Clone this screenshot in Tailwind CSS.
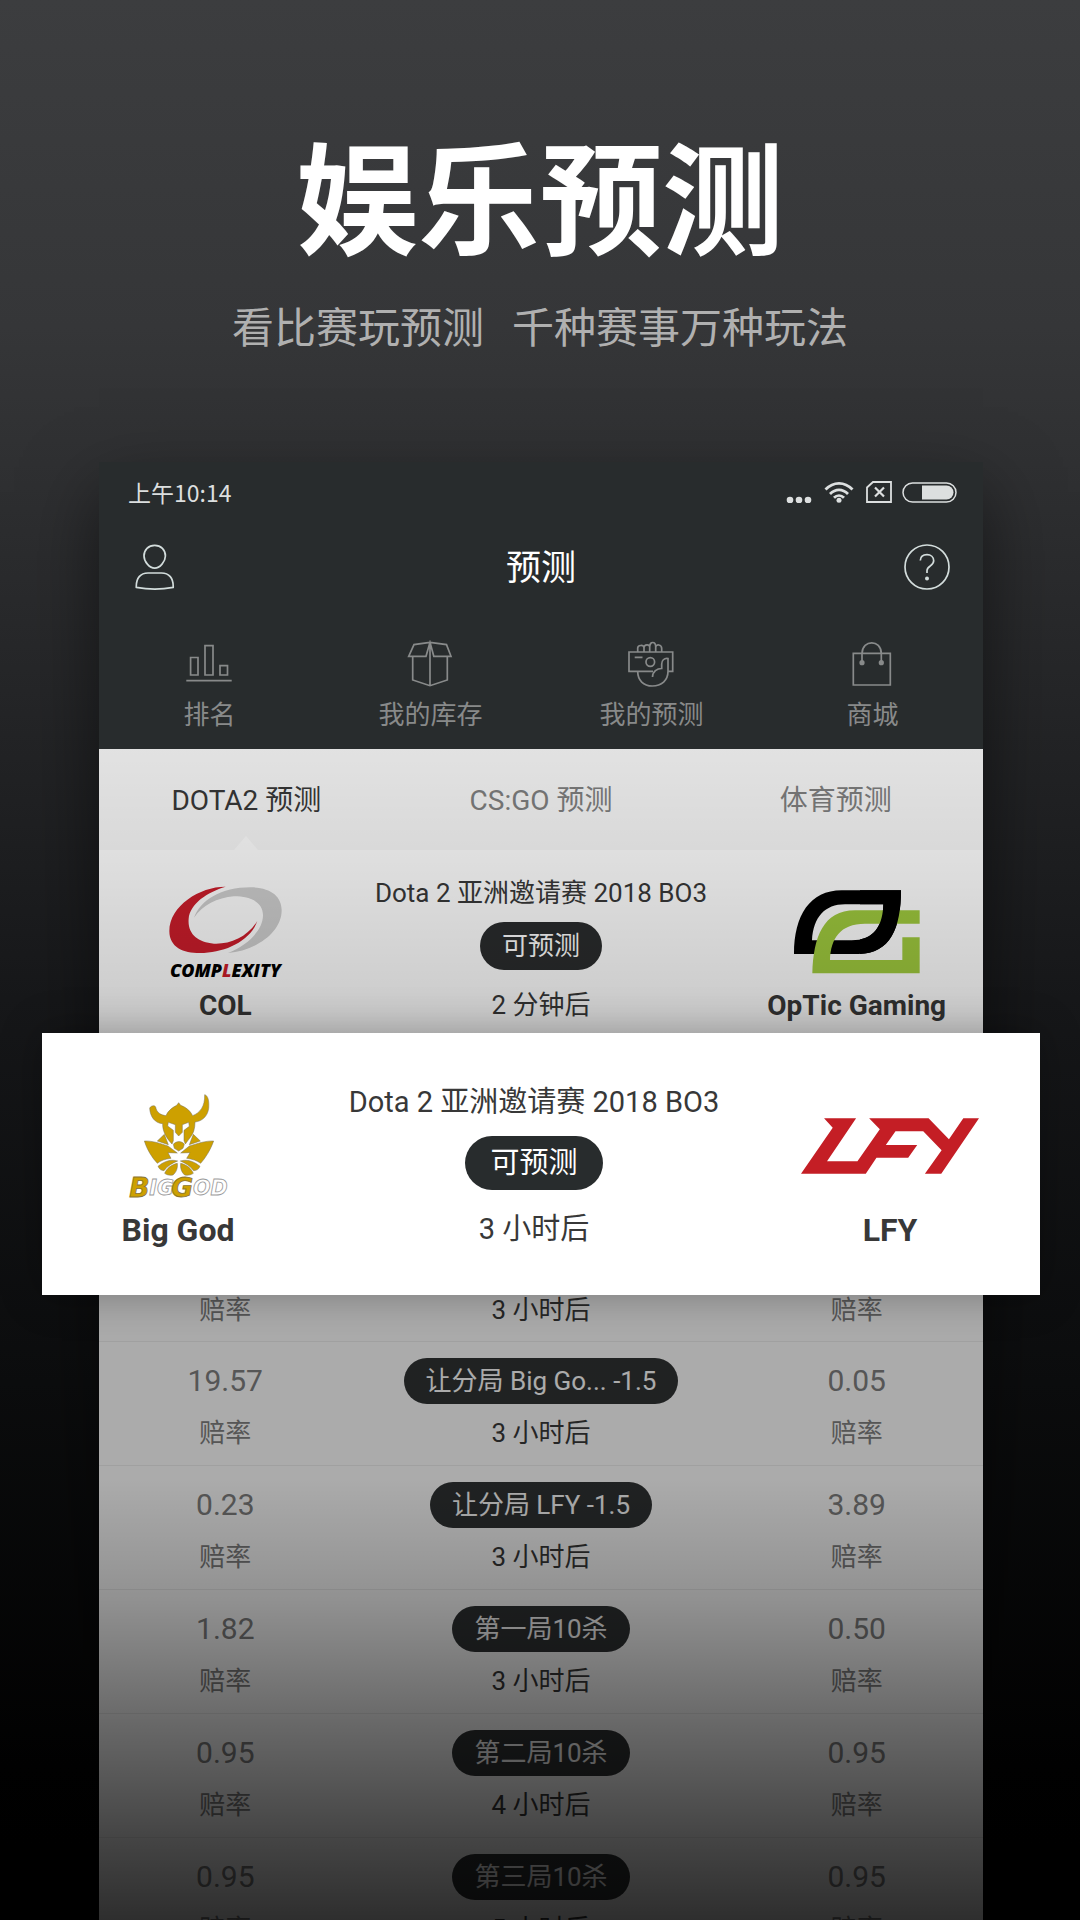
<!DOCTYPE html>
<html lang="zh-CN">
<head>
    <meta charset="UTF-8">
    <meta name="viewport" content="width=device-width, initial-scale=1.0">
    <title>娱乐预测</title>
    <script src="https://cdn.jsdelivr.net/npm/@tailwindcss/browser@4"></script>
</head>
<body class="bg-black font-[Roboto,'Noto_Sans_CJK_SC',sans-serif]">
<main class="h-screen overflow-hidden bg-[linear-gradient(to_bottom,#3c3d3f_0%,#353638_17%,#252628_36%,#17181a_52%,#0c0d0e_72%,#020202_92%,#000_100%)]">

    <!-- Headline -->
    <div class="pt-[134px] text-center">
        <h1 class="text-[122px] leading-[140px] font-bold text-white">娱乐预测</h1>
        <p class="mt-[30px] text-[42px] leading-[50px] text-[#b0b0b0] flex justify-center gap-7">
            <span>看比赛玩预测</span>
            <span>千种赛事万种玩法</span>
        </p>
    </div>

    <!-- Phone -->
    <div class="mt-[108px] ml-[99px] mr-[97px] shadow-[0_30px_70px_0_rgb(0_0_0/0.5)]">

        <header class="bg-[#282c2d]">
            <!-- Status bar -->
            <div class="flex h-[60px] items-center justify-between pl-[29px] pr-[26px] text-[#dcdfdf]">
                <span class="font-['Noto_Sans_CJK_SC',sans-serif] text-[23px]">上午10:14</span>
                <div class="flex items-center">
                    <svg class="mr-3" width="26" height="22" viewBox="0 0 26 22" fill="currentColor">
                        <circle cx="4" cy="19" r="3.3"/><circle cx="13" cy="19" r="3.3"/><circle cx="22" cy="19" r="3.3"/>
                    </svg>
                    <svg class="mr-3" width="30" height="22" viewBox="0 0 30 22" fill="none" stroke="currentColor" stroke-width="2.8">
                        <path d="M1.5 8.5C9.500 0.200 20.500 0.200 28.500 8.500M6 13C11.500 7.500 18.500 7.500 24 13M10 16.800C13 13.800 17 13.800 20 16.800"/>
                        <circle cx="15" cy="19.300" r="2.500" fill="currentColor" stroke="none"/>
                    </svg>
                    <svg class="mr-2.5" width="26" height="22" viewBox="0 0 26 22" fill="none" stroke="currentColor" stroke-width="1.8">
                        <path d="M7 1H25V21H1V6.500Z"/>
                        <path d="M9 6.500L18 15.500M18 6.500L9 15.500" stroke-width="2.200"/>
                    </svg>
                    <svg width="55" height="21" viewBox="0 0 55 21">
                        <rect x="1" y="1" width="53" height="19" rx="9.500" fill="none" stroke="currentColor" stroke-width="1.500"/>
                        <path d="M20 3.500H44.500a7 7 0 0 1 0 14H20Z" fill="currentColor"/>
                    </svg>
                </div>
            </div>

            <!-- Title bar -->
            <div class="flex h-[90px] items-center justify-between px-8">
                <button type="button" aria-label="我的">
                    <svg width="48" height="48" viewBox="0 0 48 48" fill="none" stroke="#d3dddc" stroke-width="1.700">
                        <path d="M23.700 2.400C30 2.400 34.400 7 34.400 13C34.400 18.500 29 25.200 23.700 25.200C18.400 25.200 13 18.500 13 13C13 7 17.400 2.400 23.700 2.400Z"/>
                        <path d="M5.300 44.300C5 35 9.500 30 17 30H30.500C38 30 42.500 35 42.200 44.300Q24 47.800 5.300 44.300Z"/>
                    </svg>
                </button>
                <h2 class="pt-1 text-[35px] text-white">预测</h2>
                <button type="button" aria-label="帮助">
                    <svg width="48" height="48" viewBox="0 0 48 48" fill="none" stroke="#d3dddc" stroke-width="1.700">
                        <circle cx="24" cy="24" r="22"/>
                        <path d="M17.300 17.500C17.500 13.800 20.200 11.700 24 11.700C27.800 11.700 30.700 14.200 30.700 17.800C30.700 23.300 24 22.500 24 27.500V30"/>
                        <circle cx="24" cy="35.500" r="2" fill="#d3dddc" stroke="none"/>
                    </svg>
                </button>
            </div>

            <!-- Shortcuts -->
            <nav class="grid grid-cols-4 pt-7 pb-[19px] text-[26px] leading-[30px] text-[#888a8a]">
                <a href="#rank" class="flex flex-col items-center gap-3">
                    <svg width="48" height="48" viewBox="1 0 48 48" fill="none" stroke="currentColor" stroke-width="1.700">
                        <path d="M1.300 40.700H46.700M5.600 17.500H13V35H5.600ZM20 5.600H28V35H20ZM35 25.700H42.500V35H35Z"/>
                    </svg>
                    排名
                </a>
                <a href="#stock" class="flex flex-col items-center gap-3">
                    <svg width="48" height="48" viewBox="1 0 48 48" fill="none" stroke="currentColor" stroke-width="1.700">
                        <path d="M24 2.300L8 4.600L2.700 16.300H20L24 2.300L27.800 16.300H45L40.500 4.600ZM6.700 16.300V40L24 45.700L41.300 40V16.300M24 3V45.700"/>
                    </svg>
                    我的库存
                </a>
                <a href="#bets" class="flex flex-col items-center gap-3">
                    <svg width="48" height="48" viewBox="1 0 48 48" fill="none" stroke="currentColor" stroke-width="1.700">
                        <path d="M41 31.300H45.700V12H2V31.300H26M7.700 17.300H15.500"/>
                        <circle cx="23.300" cy="22" r="4.300"/>
                        <path d="M10.700 12V8C10.700 5 16.500 4.500 17 7.500V12M17 7.500C17.300 4 22.500 4 22.700 7V12M22.700 7C22.700 1 28.700 1 28.700 7V12M28.700 7.500C29 3.500 34.700 4.500 34.700 8.500V12"/>
                        <path d="M10.700 31.300C10.700 40.500 16.500 46 25.300 46C34.500 46 41 40.500 41 31.300V18.500C37 18 34.700 20.500 34.700 24V28.500C30 28.500 25.700 31.500 25.500 37"/>
                    </svg>
                    我的预测
                </a>
                <a href="#shop" class="flex flex-col items-center gap-3">
                    <svg width="48" height="48" viewBox="1 0 48 48" fill="none" stroke="currentColor" stroke-width="1.700">
                        <path d="M5.300 13.300H42.300V45H5.300ZM14 22.500V13.500C14.500 -0.800 33 -0.800 33.300 13.500V22.500"/>
                        <circle cx="14" cy="22.700" r="2.600" fill="currentColor" stroke="none"/><circle cx="33.300" cy="22.700" r="2.600" fill="currentColor" stroke="none"/>
                    </svg>
                    商城
                </a>
            </nav>
        </header>

        <div class="relative bg-white text-[#383838]">
            <!-- Tabs -->
            <div class="grid h-[101px] grid-cols-3 bg-[#f8f8f8] text-[28px]" role="tablist">
                <button type="button" role="tab" aria-selected="true" class="relative pt-0.5">
                    DOTA2 预测
                    <svg class="absolute bottom-0 left-1/2 -translate-x-1/2" width="24" height="14" viewBox="0 0 24 14"><path d="M0 14L12 0L24 14Z" fill="#fff"/></svg>
                </button>
                <button type="button" role="tab" aria-selected="false" class="pt-0.5 text-[#808080]">CS:GO 预测</button>
                <button type="button" role="tab" aria-selected="false" class="pt-0.5 text-[#808080]">体育预测</button>
            </div>

            <!-- Match -->
            <section class="grid grid-cols-[2fr_3fr_2fr] pt-[25px] pb-[9px] text-center text-[26px] leading-9">
                <div>
                    <div class="flex h-[113px] items-center justify-center">
                        <svg class="overflow-visible" width="115" height="94" viewBox="232 434 345 282">
                            <path fill="#cc1d2b" d="M405 439C330 438 236 495 236 572C236 625 285 641 340 638C410 634 480 600 500 542C470 590 420 612 370 610C320 606 290 580 294 535C298 490 350 455 405 439Z"/>
                            <path fill="#cfcfcf" d="M310 532C330 480 390 441 480 441C540 441 573 468 573 510C573 580 490 632 412 638C470 615 517 570 517 525C517 485 480 468 430 468C380 472 335 495 310 532Z"/>
                            <text x="404" y="711" text-anchor="middle" font-family="'Open Sans'" font-size="54" font-weight="800" font-style="italic">COMP<tspan fill="#cc1d2b">L</tspan>EXITY</text>
                        </svg>
                    </div>
                    <p class="text-[28px] font-bold">COL</p>
                </div>
                <div class="flex flex-col items-center">
                    <h3>Dota 2 亚洲邀请赛 2018 BO3</h3>
                    <button type="button" class="mt-[11px] h-12 w-[122px] rounded-full bg-[#2a2c2d] text-white">可预测</button>
                    <p class="mt-[17px]">2 分钟后</p>
                </div>
                <div>
                    <div class="flex h-[113px] items-center justify-center">
                        <svg width="126" height="84" viewBox="762 450 378 250">
                            <clipPath id="leaf"><path d="M960 440H1150V650H960Z"/></clipPath>
                            <path id="ring" fill="#000" fill-rule="evenodd" d="M762 641C762 525 810 450 905 450H1083C1083 565 1050 641 955 641ZM816 600H935C1000 600 1028 560 1030 492H915C855 492 820 530 816 600Z"/>
                            <path fill="#a0cb3e" d="M817 699C820 590 850 510 945 510H1139V550H975C900 550 872 595 870 659H1087V591H1139V699Z"/>
                            <use href="#ring" clip-path="url(#leaf)"/>
                        </svg>
                    </div>
                    <p class="text-[28px] font-bold">OpTic Gaming</p>
                </div>
            </section>

            <!-- Highlighted match -->
            <section class="relative z-10 -mx-[57px] grid grid-cols-[272px_1fr_272px] bg-white pt-[49px] pr-[14px] pb-[45px] text-center text-[29px] leading-10 shadow-[0_0_40px_rgb(0_0_0/0.3)]">
                <div>
                    <div class="flex h-32 items-center justify-center">
                        <svg class="overflow-visible" width="99" height="104" viewBox="295 194 297 312">
                            <g fill="#cda000" stroke="#77725f" stroke-width="1.500">
                                <path d="M357 236C362 228 372 227 375 233C378 250 390 257 406 259C412 243 428 233 438 228L444 220L450 228C466 234 478 243 486 259C508 250 523 232 522 196C532 198 536 215 534 237C531 262 513 276 493 278C493 298 488 314 479 324L464 344L460 334V303L476 291L474 279L455 286V309L444 320L434 309V286L413 279L411 290L428 303V334L424 344C407 326 395 305 396 283C373 282 358 262 357 236Z"/>
                                <path d="M428 345C436 334 454 334 461 345L457 357L444 365L431 357Z"/>
                                <path d="M401 315L380 335L413 346ZM488 315L509 335L476 346Z"/>
                                <path d="M341 335C365 334 388 342 412 350L440 371L412 370L421 387C403 389 390 394 380 402C364 385 349 361 341 335Z"/>
                                <path d="M549 335C525 334 502 342 476 350L450 371L478 370L468 387C485 389 499 394 510 402C525 385 540 361 549 335Z"/>
                                <path d="M382 411C403 393 424 390 441 395C426 401 411 409 400 424C392 424 386 420 382 411ZM508 411C487 393 466 390 449 395C463 401 478 409 489 424C498 424 504 420 508 411Z"/>
                                <path d="M402 432C408 417 422 406 440 402C442 417 436 430 427 437C417 439 408 437 402 432ZM488 432C482 417 468 406 450 402C448 417 453 430 462 437C472 439 481 437 488 432Z"/>
                            </g>
                            <g font-family="'DejaVu Sans'" font-weight="700" font-style="italic" stroke-width="2.500">
                                <text x="356" y="497" font-size="62" fill="#fff" stroke="#9a9a9a">IG</text>
                                <text x="487" y="497" font-size="62" fill="#fff" stroke="#9a9a9a">OD</text>
                                <text x="296" y="502" font-size="80" fill="#cda000" stroke="#8a7430">B</text>
                                <text x="422" y="502" font-size="80" fill="#cda000" stroke="#8a7430">G</text>
                            </g>
                        </svg>
                    </div>
                    <p class="text-[32px] font-bold">Big God</p>
                </div>
                <div class="flex flex-col items-center">
                    <h3>Dota 2 亚洲邀请赛 2018 BO3</h3>
                    <button type="button" class="mt-[14px] h-[54px] w-[138px] rounded-full bg-[#282c2d] text-white">可预测</button>
                    <p class="mt-[19px]">3 小时后</p>
                </div>
                <div>
                    <div class="flex h-32 items-center justify-center">
                        <svg width="178" height="56" viewBox="784 266 533 166">
                            <path fill="#c41e25" d="M853 266H949L862 395H953L1020 299L988 266H1166L1227 329L1270 266H1317L1204 432H1155L1205 362L1150 305H1067L1038 346H1132L1105 384H1010L978 432H784L879 294Z"/>
                        </svg>
                    </div>
                    <p class="text-[32px] font-bold">LFY</p>
                </div>
            </section>

            <!-- Odds -->
            <div id="odds" class="text-center text-[26px] leading-[30px]">
                <div class="grid grid-cols-[2fr_3fr_2fr] border-b border-[#eee] pb-4">
                    <p class="text-[#808080]">赔率</p>
                    <p>3 小时后</p>
                    <p class="text-[#808080]">赔率</p>
                </div>
            </div>

            <!-- Shade that darkens towards the bottom -->
            <div class="pointer-events-none absolute inset-0 bg-[linear-gradient(to_bottom,rgb(0_0_0/0.09)_0px,rgb(0_0_0/0.13)_110px,rgb(0_0_0/0.21)_284px,rgb(0_0_0/0.33)_546px,rgb(0_0_0/0.33)_730px,rgb(0_0_0/0.43)_850px,rgb(0_0_0/0.58)_965px,rgb(0_0_0/0.73)_1087px,rgb(0_0_0/0.82)_1171px)]"></div>
        </div>
    </div>
</main>

<script>
    const odds = [
        ['19.57', '让分局 Big Go... -1.5', '3 小时后', '0.05'],
        ['0.23', '让分局 LFY -1.5', '3 小时后', '3.89'],
        ['1.82', '第一局10杀', '3 小时后', '0.50'],
        ['0.95', '第二局10杀', '4 小时后', '0.95'],
        ['0.95', '第三局10杀', '5 小时后', '0.95'],
    ]

    const side = (value) => `
        <div class="text-[#808080]">
            <p class="text-[30px] leading-[46px]">${value}</p>
            <p class="mt-[14px]">赔率</p>
        </div>`

    document.getElementById('odds').insertAdjacentHTML('beforeend', odds.map(([left, name, time, right]) => `
        <div class="grid grid-cols-[2fr_3fr_2fr] border-b border-[#eee] pt-4 pb-[17px]">
            ${side(left)}
            <div>
                <button type="button" class="block mx-auto h-[46px] rounded-full bg-[#2f3233] px-[22px] text-white">${name}</button>
                <p class="mt-[14px]">${time}</p>
            </div>
            ${side(right)}
        </div>`).join(''))
</script>
</body>
</html>
